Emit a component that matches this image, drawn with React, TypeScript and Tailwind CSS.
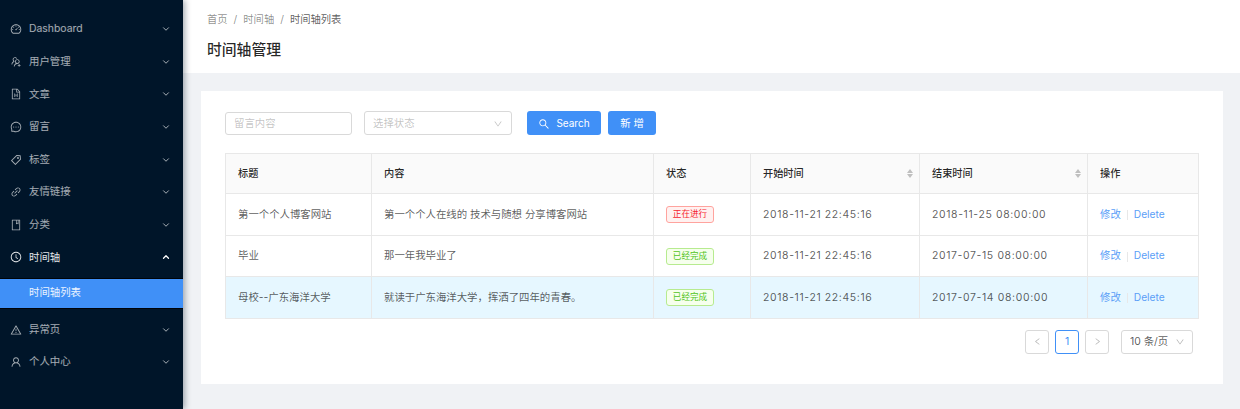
import { ChevronDown, ChevronUp } from "lucide-react";
import type { IconType } from "react-icons";
import { AiOutlineBook, AiOutlineClockCircle, AiOutlineDashboard, AiOutlineDown, AiOutlineFileMarkdown, AiOutlineLeft, AiOutlineLink, AiOutlineMessage, AiOutlineRight, AiOutlineSearch, AiOutlineTag, AiOutlineUser, AiOutlineUsergroupAdd, AiOutlineWarning } from "react-icons/ai";

const FONT = "font-['Inter','Noto_Sans_CJK_SC',sans-serif]";

function MenuRow({ icon: Icon, label, open = false }: { icon: IconType; label: string; open?: boolean }) {
  return (
    <div className={`flex h-[32.6px] items-center pl-[10px] pr-[12px] text-[10.4px] ${open ? "text-white/90" : "text-white/65"}`}>
      <Icon size={12} className="shrink-0" />
      <span className="ml-[7px] flex-1">{label}</span>
      {open ? <ChevronUp size={10} strokeWidth={3} className="text-white" /> : <ChevronDown size={10} strokeWidth={2.4} />}
    </div>
  );
}

function Sidebar() {
  return (
    <aside className="z-10 h-[409px] w-[183px] shrink-0 bg-[#001529] pt-[13px] shadow-[2px_0_6px_rgba(0,21,41,0.35)]">
      <MenuRow icon={AiOutlineDashboard} label="Dashboard" />
      <MenuRow icon={AiOutlineUsergroupAdd} label="用户管理" />
      <MenuRow icon={AiOutlineFileMarkdown} label="文章" />
      <MenuRow icon={AiOutlineMessage} label="留言" />
      <MenuRow icon={AiOutlineTag} label="标签" />
      <MenuRow icon={AiOutlineLink} label="友情链接" />
      <MenuRow icon={AiOutlineBook} label="分类" />
      <MenuRow icon={AiOutlineClockCircle} label="时间轴" open />
      <div className="mt-[4px] border-y-[1px] border-black/60 bg-[#000c17]">
        <div className="flex h-[29px] items-center bg-[#4090f7] pl-[29px] text-[10.4px] text-white/90">时间轴列表</div>
      </div>
      <div className="mt-[4.5px]">
        <MenuRow icon={AiOutlineWarning} label="异常页" />
        <MenuRow icon={AiOutlineUser} label="个人中心" />
      </div>
    </aside>
  );
}

function Header() {
  return (
    <header className="h-[73px] bg-white px-[24px] pt-[12px]">
      <div className="flex h-[15px] items-center gap-[6px] text-[10.3px] leading-none text-black/45">
        <span>首页</span>
        <span>/</span>
        <span>时间轴</span>
        <span>/</span>
        <span className="text-black/65">时间轴列表</span>
      </div>
      <h1 className="mt-[13px] text-[14.8px] font-medium leading-[20px] text-black/85">时间轴管理</h1>
    </header>
  );
}

function Filters() {
  return (
    <div className="flex h-[24px] items-center text-[10.4px]">
      <div className="flex h-[23px] w-[127px] items-center rounded-[3px] border border-[#d9d9d9] pl-[8px] pt-[1px] text-black/25">留言内容</div>
      <div className="ml-[12px] flex h-[24px] w-[148px] items-center justify-between rounded-[3px] border border-[#d9d9d9] pl-[8px] pr-[8px] pt-[1px] text-black/25">
        选择状态
        <AiOutlineDown size={10} />
      </div>
      <button className="ml-[15px] flex h-[24px] w-[74px] items-center justify-center gap-[6px] rounded-[3px] bg-[#4090f7] pt-[1px] text-[10px] text-white">
        <AiOutlineSearch size={12} />
        Search
      </button>
      <button className="ml-[7px] h-[24px] w-[48px] rounded-[3px] bg-[#4090f7] pt-[1px] text-white">新 增</button>
    </div>
  );
}

function SortHead({ label }: { label: string }) {
  return (
    <div className="flex items-center justify-between">
      {label}
      <span className="mr-[-6px] flex flex-col gap-[1px]">
        <span className="h-0 w-0 border-x-[3px] border-b-[4px] border-x-transparent border-b-[#bfbfbf]" />
        <span className="h-0 w-0 border-x-[3px] border-t-[4px] border-x-transparent border-t-[#bfbfbf]" />
      </span>
    </div>
  );
}

function StatusTag({ done }: { done: boolean }) {
  return (
    <span className={`inline-block h-[17px] w-[48px] rounded-[3px] border text-center text-[8.6px] leading-[15px] ${done ? "border-[#b7eb8f] bg-[#f6ffed] text-[#52c41a]" : "border-[#ffa39e] bg-[#fff1f0] text-[#f5222d]"}`}>
      {done ? "已经完成" : "正在进行"}
    </span>
  );
}

const rows = [
  { title: "第一个个人博客网站", content: "第一个个人在线的 技术与随想 分享博客网站", done: false, start: "2018-11-21 22:45:16", end: "2018-11-25 08:00:00" },
  { title: "毕业", content: "那一年我毕业了", done: true, start: "2018-11-21 22:45:16", end: "2017-07-15 08:00:00" },
  { title: "母校--广东海洋大学", content: "就读于广东海洋大学，挥洒了四年的青春。", done: true, start: "2018-11-21 22:45:16", end: "2017-07-14 08:00:00" },
];

function TimelineTable() {
  const th = "border border-[#e8e8e8] bg-[#fafafa] px-[12px] pt-[1px] text-left text-[10.2px] font-medium text-black/85";
  const td = "border border-[#e8e8e8] px-[12px] pt-[1px] text-[10.4px] text-black/65";
  return (
    <table className="mt-[18px] w-[973px] table-fixed border-collapse">
      <colgroup>
        <col className="w-[146px]" />
        <col className="w-[282px]" />
        <col className="w-[97px]" />
        <col className="w-[169px]" />
        <col className="w-[168px]" />
        <col className="w-[111px]" />
      </colgroup>
      <thead>
        <tr className="h-[40px]">
          <th className={th}>标题</th>
          <th className={th}>内容</th>
          <th className={th}>状态</th>
          <th className={th}><SortHead label="开始时间" /></th>
          <th className={th}><SortHead label="结束时间" /></th>
          <th className={th}>操作</th>
        </tr>
      </thead>
      <tbody>
        {rows.map((row, i) => (
          <tr key={row.end} className={`h-[41.5px] ${i === 2 ? "bg-[#e6f7ff]" : ""}`}>
            <td className={td}>{row.title}</td>
            <td className={td}>{row.content}</td>
            <td className={td}><StatusTag done={row.done} /></td>
            <td className={`${td} tracking-[0.65px]`}>{row.start}</td>
            <td className={`${td} tracking-[0.65px]`}>{row.end}</td>
            <td className={td}>
              <span className="text-[#5a9ef7]">修改</span>
              <span className="mx-[6px] inline-block h-[10px] w-px bg-[#e8e8e8] align-middle" />
              <span className="text-[10.2px] text-[#5a9ef7]">Delete</span>
            </td>
          </tr>
        ))}
      </tbody>
    </table>
  );
}

function Pager() {
  const box = "flex h-[24px] w-[24px] items-center justify-center rounded-[3px] border";
  return (
    <div className="mt-[11px] flex justify-end pr-[6px] text-[10.4px]">
      <div className={`${box} border-[#d9d9d9] text-black/30`}><AiOutlineLeft size={9} /></div>
      <div className={`${box} ml-[6px] border-[#4090f7] text-[#4090f7]`}>1</div>
      <div className={`${box} ml-[6px] border-[#d9d9d9] text-black/30`}><AiOutlineRight size={9} /></div>
      <div className="ml-[12px] flex h-[24px] w-[72px] items-center justify-between rounded-[3px] border border-[#d9d9d9] pl-[8px] pr-[7px] text-black/65">
        10 条/页
        <AiOutlineDown size={10} className="text-black/30" />
      </div>
    </div>
  );
}

export default function App() {
  return (
    <div className={`flex h-[409px] w-[1240px] overflow-hidden bg-[#f0f2f5] ${FONT}`}>
      <Sidebar />
      <main className="flex-1">
        <Header />
        <div className="ml-[18px] mt-[18px] h-[293px] w-[1022px] bg-white px-[24px] pt-[20px]">
          <Filters />
          <TimelineTable />
          <Pager />
        </div>
      </main>
    </div>
  );
}
